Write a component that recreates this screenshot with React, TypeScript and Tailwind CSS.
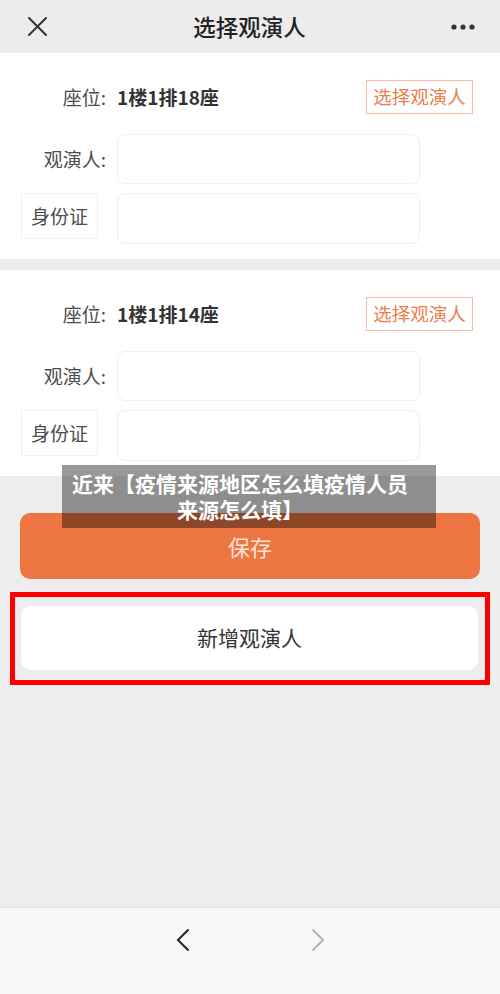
import React from 'react';

const font = { fontFamily: '"Noto Sans CJK SC", "Noto Sans", sans-serif' };

const SeatCard: React.FC<{ seat: string }> = ({ seat }) => (
  <div className="bg-white pt-[27px] pb-[15px]">
    <div className="flex items-center h-[34px]">
      <div className="w-[106px] text-right text-[19px] text-[#4d4d4d]">座位:</div>
      <div className="ml-[11px] text-[19px] font-bold text-[#333]">{seat}</div>
      <div className="ml-auto mr-[27px] w-[107px] h-[34px] border border-[#f2bda4] flex items-center justify-center text-[18.5px] text-[#e9804f]">
        选择观演人
      </div>
    </div>
    <div className="flex items-center mt-[20px]">
      <div className="w-[106px] text-right text-[19px] text-[#4d4d4d]">观演人:</div>
      <div className="ml-[11px] w-[303px] h-[50px] rounded-[8px] border border-[#efefef] bg-white" />
    </div>
    <div className="flex items-start mt-[9px]">
      <div className="ml-[21px] w-[77px] h-[46px] border border-[#efefef] flex items-center justify-center text-[19px] text-[#4d4d4d]">
        身份证
      </div>
      <div className="ml-[19px] w-[303px] h-[51px] rounded-[8px] border border-[#efefef] bg-white" />
    </div>
  </div>
);

export default function App() {
  return (
    <div className="relative w-[500px] h-[994px] bg-[#ededed] flex flex-col overflow-hidden" style={font}>
      {/* header */}
      <div className="h-[53px] flex items-center justify-between pl-[27px] pr-[25px] bg-[#ececec]">
        <svg width="21" height="21" viewBox="0 0 21 21">
          <path d="M2 2 L19 19 M19 2 L2 19" stroke="#333" strokeWidth="2" strokeLinecap="round" />
        </svg>
        <div className="text-[22.5px] text-[#222] font-medium">选择观演人</div>
        <svg width="24" height="6" viewBox="0 0 24 6">
          <circle cx="3" cy="3" r="2.6" fill="#333" />
          <circle cx="12" cy="3" r="2.6" fill="#333" />
          <circle cx="21" cy="3" r="2.6" fill="#333" />
        </svg>
      </div>

      <SeatCard seat="1楼1排18座" />
      <div className="h-[11px]" />
      <SeatCard seat="1楼1排14座" />

      {/* save */}
      <div className="mt-[37px] mx-[20px] h-[66px] rounded-[10px] bg-[#ec7541] flex items-center justify-center text-[22px] text-[#fde3d4]">
        保存
      </div>

      {/* highlighted add button */}
      <div className="mt-[13px] mx-[10px] border-[5px] border-[#ff0000] pt-[9px] pb-[10px] pl-[6px] pr-[7px]">
        <div className="h-[64px] rounded-[10px] bg-white flex items-center justify-center text-[21px] text-[#333]">
          新增观演人
        </div>
      </div>

      <div className="flex-1" />

      {/* bottom nav */}
      <div className="h-[87px] bg-[#f7f7f7] border-t border-[#e3e3e3] flex pt-[20px] justify-center gap-[121px]">
        <svg width="14" height="24" viewBox="0 0 14 24">
          <path d="M12.5 1.5 L2 12 L12.5 22.5" fill="none" stroke="#222" strokeWidth="2" />
        </svg>
        <svg width="14" height="24" viewBox="0 0 14 24">
          <path d="M1.5 1.5 L12 12 L1.5 22.5" fill="none" stroke="#b5b5b5" strokeWidth="2" />
        </svg>
      </div>

      {/* caption overlay */}
      <div className="absolute left-[62px] top-[465px] w-[374px] h-[63px] bg-[rgba(0,0,0,0.4)] pl-[9px] pr-[27px] pt-[5px] text-center text-[21px] leading-[26px] font-bold text-white">
        近来【疫情来源地区怎么填疫情人员来源怎么填】
      </div>
    </div>
  );
}
